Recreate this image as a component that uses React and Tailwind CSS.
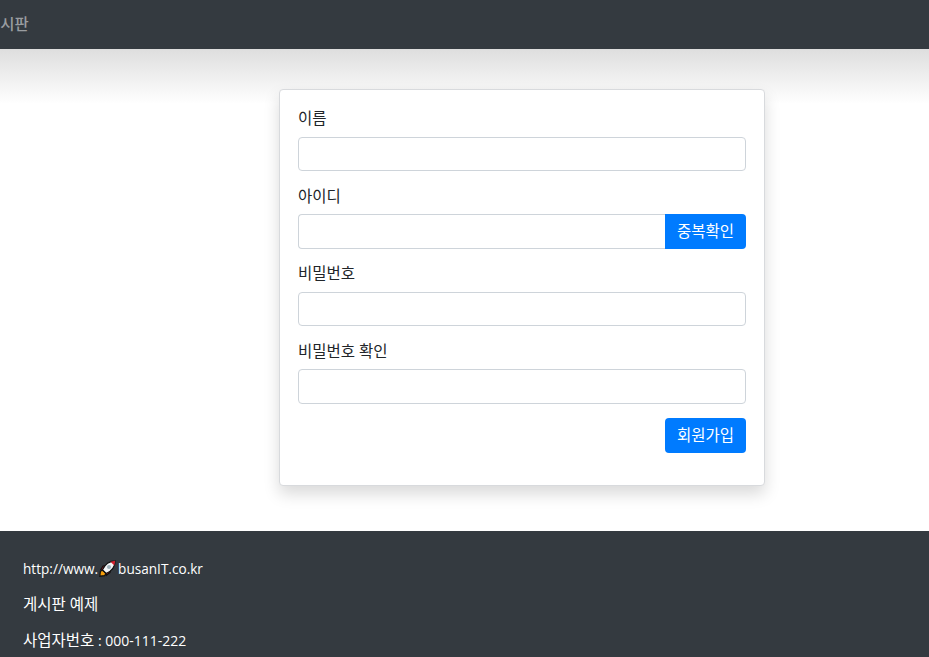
const Rocket = () => (
  <svg width="17" height="17" viewBox="0 0 17 17" className="shrink-0">
    <path d="M.8 16.200l.6-5 2.200-1 3.200 3.200-1 2.200z" fill="#f59e0b" stroke="#111" strokeWidth="1.200" />
    <path d="M1.800 9.500L4 6l3.500-.5-3 5.500z" fill="#d81e2c" stroke="#111" strokeWidth="1.200" />
    <path d="M7.500 15.200l3.500-2.700.5-3.500-5.500 3z" fill="#d81e2c" stroke="#111" strokeWidth="1.200" />
    <path d="M3.500 9.800C5.500 5 10 1 16.200.8c-.2 6-4.200 10.700-9 12.700z" fill="#f2f5f7" stroke="#111" strokeWidth="1.200" />
    <path d="M11.500 1.800l4.700-1-.9 4.800z" fill="#d81e2c" />
    <circle cx="10" cy="7" r="2" fill="#9fb2bb" />
  </svg>
);

const Field = ({ label, className = "" }) => (
  <div className={className}>
    <label className="block text-[15.5px] leading-[21px] text-[#212529] mb-[8px]">{label}</label>
    <input className="block w-full h-[34px] border border-[#ced4da] rounded-[4px] bg-white px-3" />
  </div>
);

const BlueButton = ({ children, className = "" }) => (
  <button className={`h-[35px] w-[81px] bg-[#007bff] text-white text-[15.5px] ${className}`}>
    {children}
  </button>
);

export default function App() {
  return (
    <div className="font-['Open_Sans','Noto_Sans_CJK_KR',sans-serif] h-[657px] overflow-hidden bg-white flex flex-col">
      {/* Navbar */}
      <nav className="h-[49px] shrink-0 bg-[#343a40] flex items-center overflow-hidden">
        <span className="-ml-[14px] text-[15.5px] font-medium text-[#9a9da0]">게시판</span>
      </nav>

      {/* Main */}
      <main className="h-[482px] shrink-0 pl-[279px] pt-[40px] bg-[linear-gradient(#dedede,#ffffff)] bg-no-repeat bg-[size:100%_55px]">
        <div className="w-[486px] h-[397px] bg-white border border-[#d8dadd] rounded-[4px] shadow-[0_8px_16px_rgba(0,0,0,0.15)] px-[18px] pt-[18px]">
          <Field label="이름" />
          <div className="mt-[15px]">
            <label className="block text-[15.5px] leading-[21px] text-[#212529] mb-[7px]">아이디</label>
            <div className="flex">
              <input className="flex-1 min-w-0 h-[35px] border border-[#ced4da] border-r-0 rounded-l-[4px] bg-white px-3" />
              <BlueButton className="rounded-r-[4px]">중복확인</BlueButton>
            </div>
          </div>
          <Field label="비밀번호" className="mt-[14px]" />
          <div className="mt-[15px]">
            <label className="block text-[15.5px] leading-[21px] text-[#212529] mb-[7px]">비밀번호 확인</label>
            <input className="block w-full h-[35px] border border-[#ced4da] rounded-[4px] bg-white px-3" />
          </div>
          <div className="flex justify-end mt-[14px]">
            <BlueButton className="rounded-[4px]">회원가입</BlueButton>
          </div>
        </div>
      </main>

      {/* Footer */}
      <footer className="flex-1 bg-[#343a40] text-white text-[13.6px] leading-[21px] px-[23px] pt-[27px]">
        <p className="flex items-center">
          http://www.<span className="mx-[1px]"><Rocket /></span>
          <span className="ml-[1px]">busanIT.co.kr</span>
        </p>
        <p className="mt-[15px] text-[15.5px]">게시판 예제</p>
        <p className="mt-[15px] text-[14px]">
          <span className="text-[15.5px]">사업자번호</span> : 000-111-222
        </p>
      </footer>
    </div>
  );
}
